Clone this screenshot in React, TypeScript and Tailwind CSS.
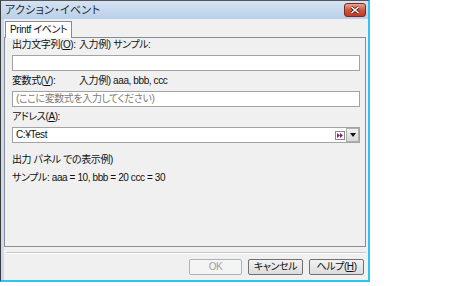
export default function App() {
  const jp = "font-['Liberation_Sans','Noto_Sans_CJK_JP',sans-serif] [font-feature-settings:'palt'] whitespace-nowrap";

  return (
    <div className={`h-[286px] w-[452px] bg-white ${jp}`}>
      {/* Window */}
      <div className="flex h-[282px] w-[370px] flex-col border-b-2 border-l border-r-2 border-t border-b-[#2fc4ef] border-l-[#3a3a3a] border-r-[#2fc4ef] border-t-[#555]">
        {/* Title bar */}
        <div className="flex h-[18px] items-center justify-between bg-gradient-to-b from-[#d5e3f3] to-[#b9cfe9] pl-[4px] pr-[2px]">
          <span className="text-[11px] leading-[12px] tracking-[0.3px] text-[#2a2a2a]">アクション・イベント</span>
          <div className="flex h-[14px] w-[22px] items-center justify-center rounded-[3px] border border-[#7a2a22] bg-gradient-to-b from-[#e8a493] via-[#d0563f] to-[#c13a26]">
            <svg width="10" height="8" viewBox="0 0 10 8">
              <path d="M1.5 1 L8.5 7 M8.5 1 L1.5 7" stroke="#4a1a14" strokeWidth="3" />
              <path d="M1.5 1 L8.5 7 M8.5 1 L1.5 7" stroke="#fff" strokeWidth="1.6" />
            </svg>
          </div>
        </div>

        {/* Client area */}
        <div className="flex flex-1 flex-col border-l-[3px] border-[#c9daee] bg-[#f0f0f0] pt-[2px] text-[10px] leading-[12px] tracking-[-0.4px] text-[#111]">
          {/* Tab */}
          <div className="flex pl-[1px]">
            <div className="relative z-10 -mb-px flex h-[17px] items-start border border-b-0 border-[#898c95] bg-white px-[4px] pt-[2px]">
              Printf イベント
            </div>
          </div>

          {/* Panel */}
          <div className="mr-[2px] flex h-[210px] flex-col border border-[#898c95] bg-[#f0f0f0] pl-[7px] pr-[5px] pt-[1px]">
            <div className="flex h-[12px] items-center">
              <span className="w-[67px]">
                出力文字列(<span className="underline">O</span>):
              </span>
              <span>入力例) サンプル:</span>
            </div>
            <div className="mt-[4px] h-[16px] border border-[#a3a3a3] bg-white" />

            <div className="mt-[4px] flex h-[12px] items-center">
              <span className="w-[67px]">
                変数式(<span className="underline">V</span>):
              </span>
              <span>入力例) aaa, bbb, ccc</span>
            </div>
            <div className="mt-[4px] flex h-[16px] items-center border border-[#a3a3a3] bg-white pl-[3px] text-[#7a7a7a]">
              (ここに変数式を入力してください)
            </div>

            <div className="mt-[4px] flex h-[12px] items-center">
              <span>
                アドレス(<span className="underline">A</span>):
              </span>
            </div>
            <div className="mt-[4px] flex h-[16px] items-center justify-between border border-[#a3a3a3] bg-white pl-[3px]">
              <span>C:¥Test</span>
              <div className="flex items-center">
                <div className="flex h-[9px] w-[10px] items-center justify-center border border-[#8a8a8a] bg-white">
                  <svg width="6" height="5" viewBox="0 0 6 5">
                    <path d="M0 0 L3 2.5 L0 5 Z M3 0 L6 2.5 L3 5 Z" fill="#8a1f7a" />
                  </svg>
                </div>
                <div className="ml-[1px] flex h-[14px] w-[13px] items-center justify-center border border-[#b0b0b0] bg-gradient-to-b from-[#f2f2f2] to-[#d8d8d8]">
                  <svg width="6" height="4" viewBox="0 0 6 4">
                    <path d="M0 0 H6 L3 4 Z" fill="#111" />
                  </svg>
                </div>
              </div>
            </div>

            <div className="mt-[11px] h-[12px]">出力 パネル での表示例)</div>
            <div className="mt-[6px] h-[12px]">サンプル: aaa = 10, bbb = 20 ccc = 30</div>
          </div>

          {/* Separator */}
          <div className="ml-[2px] mr-[2px] mt-[5px] h-[2px] border-b border-t border-b-white border-t-[#c8c8c8]" />

          {/* Buttons */}
          <div className="mr-[4px] mt-[5px] flex justify-end gap-[6px]">
            <button className="flex h-[16px] w-[53px] items-center justify-center rounded-[2px] border border-[#adb2b5] bg-[#f4f4f4] text-[#a0a0a0]">
              OK
            </button>
            <button className="flex h-[16px] w-[55px] items-center justify-center rounded-[2px] border border-[#707070] bg-gradient-to-b from-[#f2f2f2] to-[#dcdcdc]">
              キャンセル
            </button>
            <button className="flex h-[16px] w-[55px] items-center justify-center rounded-[2px] border border-[#707070] bg-gradient-to-b from-[#f2f2f2] to-[#dcdcdc]">
              ヘルプ(<span className="underline">H</span>)
            </button>
          </div>
        </div>
      </div>
    </div>
  );
}
